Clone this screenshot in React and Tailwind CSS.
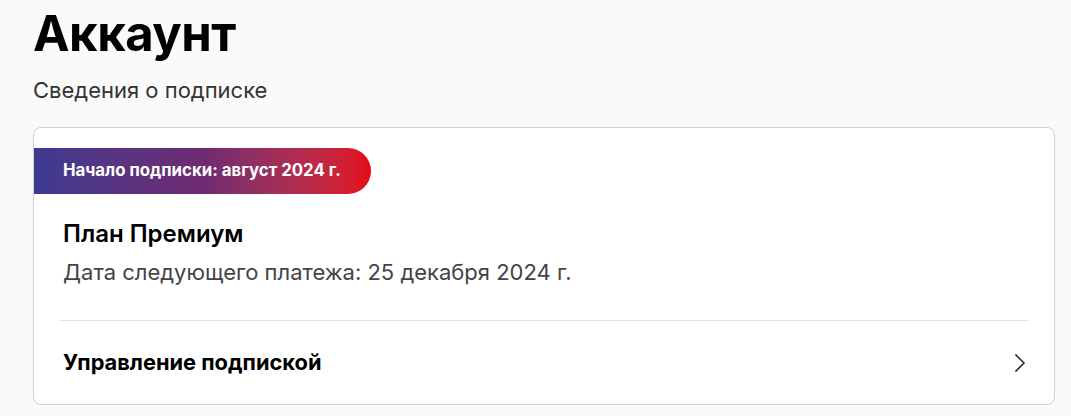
import React from "react";

export default function App() {
  return (
    <div
      className="min-h-[416px] w-full bg-[#fafafa] pl-[33px] pr-[16px] pt-[5px]"
      style={{ fontFamily: "Inter, 'Noto Sans', sans-serif" }}
    >
      <h1 className="text-[49px] font-bold leading-[58px] tracking-[-0.5px] text-black">
        Аккаунт
      </h1>
      <p className="mt-[13px] text-[22px] leading-[28px] text-[#333]">
        Сведения о подписке
      </p>
      <div className="mt-[23px] rounded-[8px] border border-[#cfcfcf] bg-white pt-[20px]">
        <div className="inline-flex h-[46px] items-center rounded-r-full bg-gradient-to-r from-[#3c3a91] via-[#6f2a72] to-[#e50914] pl-[29px] pr-[30px] text-[16.8px] font-bold text-white">
          Начало подписки: август 2024 г.
        </div>
        <div className="px-[29px] pt-[24px]">
          <div className="text-[24px] font-semibold leading-[32px] text-black">
            План Премиум
          </div>
          <div className="mt-[7px] text-[22px] leading-[30px] text-[#444]">
            Дата следующего платежа: 25 декабря 2024 г.
          </div>
        </div>
        <div className="mx-[25px] mt-[33px] h-px bg-[#e3e3e3]" />
        <div className="flex h-[83px] items-center justify-between pl-[29px] pr-[28px]">
          <span className="text-[21.8px] font-bold text-black">
            Управление подпиской
          </span>
          <svg width="12" height="20" viewBox="0 0 12 20" fill="none">
            <path
              d="M2 2L10 10L2 18"
              stroke="#333"
              strokeWidth="1.6"
              strokeLinecap="square"
            />
          </svg>
        </div>
      </div>
    </div>
  );
}
